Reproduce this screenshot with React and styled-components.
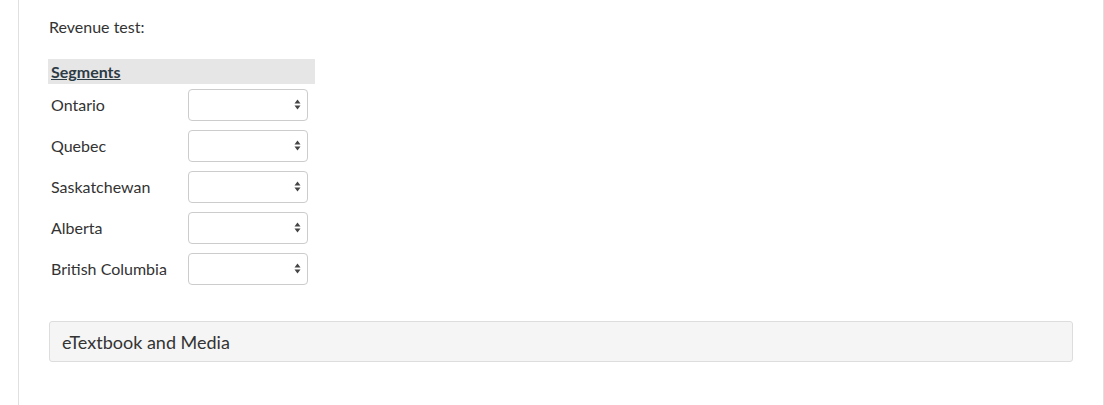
import React from 'react'
import styled, { createGlobalStyle } from 'styled-components'

const Global = createGlobalStyle`
    body {
        margin: 0;
        background: #fff;
        font-family: Lato, "Open Sans", sans-serif;
        color: #333;
    }
`

const Panel = styled.div`
    margin-left: 18px;
    width: 1086px;
    min-height: 405px;
    box-sizing: border-box;
    border-left: 1px solid #e0e0e0;
    border-right: 1px solid #e0e0e0;
    padding: 17px 30px 0 30px;
`

const Question = styled.div`
    font-size: 16px;
    line-height: 20px;
    margin-bottom: 22px;
`

const Table = styled.div`
    width: 267px;
    margin-left: -1px;
`

const TableHead = styled.div`
    height: 25px;
    background: #e6e6e6;
    padding-left: 3px;
    display: flex;
    align-items: center;
    font-size: 16px;
    font-weight: 700;
    color: #2d3b45;
    text-decoration: underline;
`

const Row = styled.div`
    height: 41px;
    display: grid;
    grid-template-columns: 140px 120px;
    align-items: center;
`

const Label = styled.div`
    padding-left: 3px;
    font-size: 16px;
    color: #333;
`

const SelectBox = styled.div`
    height: 32px;
    box-sizing: border-box;
    border: 1px solid #ccc;
    border-radius: 4px;
    background: #fff;
    display: flex;
    align-items: center;
    justify-content: flex-end;
    padding-right: 6px;
`

const Accordion = styled.div`
    margin-top: 32px;
    height: 41px;
    box-sizing: border-box;
    border: 1px solid #ddd;
    border-radius: 3px;
    background: #f5f5f5;
    display: flex;
    align-items: center;
    padding-left: 12px;
    font-size: 18px;
    color: #333;
`

const Arrows = () => (
    <svg width="7" height="11" viewBox="0 0 7 11">
        <path d="M3.5 0.5 L6.5 4.5 L0.5 4.5 Z" fill="#444" />
        <path d="M0.5 6.5 L6.5 6.5 L3.5 10.5 Z" fill="#444" />
    </svg>
)

const segments = ['Ontario', 'Quebec', 'Saskatchewan', 'Alberta', 'British Columbia']

export default function App() {
    return (
        <>
            <Global />
            <Panel>
                <Question>Revenue test:</Question>
                <Table>
                    <TableHead>Segments</TableHead>
                    {segments.map(s => (
                        <Row key={s}>
                            <Label>{s}</Label>
                            <SelectBox>
                                <Arrows />
                            </SelectBox>
                        </Row>
                    ))}
                </Table>
                <Accordion>eTextbook and Media</Accordion>
            </Panel>
        </>
    )
}
